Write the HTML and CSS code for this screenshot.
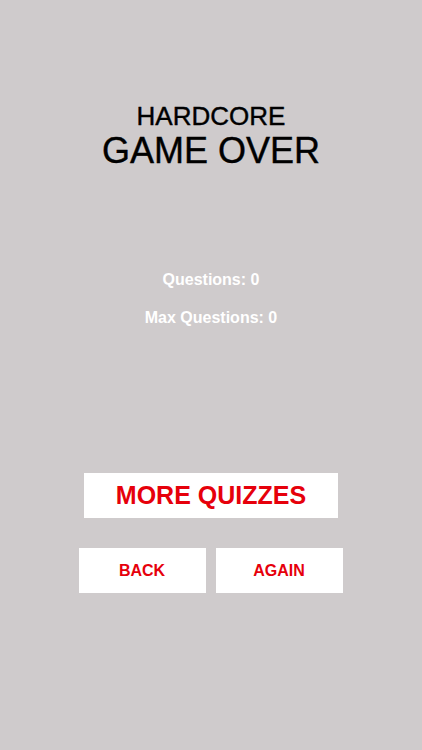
FILE: index.html
```html
<!DOCTYPE html>
<html>
<head>
<meta charset="utf-8">
<link rel="stylesheet" href="styles.css">
</head>
<body>
<main class="screen">
  <header class="title">
    <div class="mode">HARDCORE</div>
    <div class="over">GAME OVER</div>
  </header>
  <section class="stats">
    <div class="stat">Questions: 0</div>
    <div class="stat">Max Questions: 0</div>
  </section>
  <section class="actions">
    <div class="btn btn-wide">MORE QUIZZES</div>
    <div class="row">
      <div class="btn btn-small">BACK</div>
      <div class="btn btn-small">AGAIN</div>
    </div>
  </section>
</main>
</body>
</html>
```
FILE: styles.css
```css
html, body {
  margin: 0;
  padding: 0;
}
body {
  background: #cfcbcc;
  font-family: "Liberation Sans", Arial, sans-serif;
  width: 422px;
  height: 750px;
  overflow: hidden;
}
.screen {
  display: flex;
  flex-direction: column;
  align-items: center;
  padding-top: 102px;
}
.title {
  display: flex;
  flex-direction: column;
  align-items: center;
  color: #000;
  -webkit-text-stroke: 0.4px #000;
}
.mode {
  font-size: 26px;
  line-height: 29px;
}
.over {
  font-size: 36px;
  line-height: 40px;
}
.stats {
  margin-top: 99px;
  display: flex;
  flex-direction: column;
  align-items: center;
  gap: 18px;
}
.stat {
  color: #fff;
  font-weight: bold;
  font-size: 16px;
  line-height: 20px;
}
.actions {
  margin-top: 145px;
  display: flex;
  flex-direction: column;
  align-items: center;
  gap: 30px;
}
.btn {
  background: #fff;
  color: #e6000b;
  font-weight: bold;
  display: flex;
  align-items: center;
  justify-content: center;
  height: 45px;
}
.btn-wide {
  width: 254px;
  font-size: 25px;
}
.row {
  display: flex;
  gap: 10px;
  margin-left: -1px;
}
.btn-small {
  width: 127px;
  font-size: 16px;
}
```
